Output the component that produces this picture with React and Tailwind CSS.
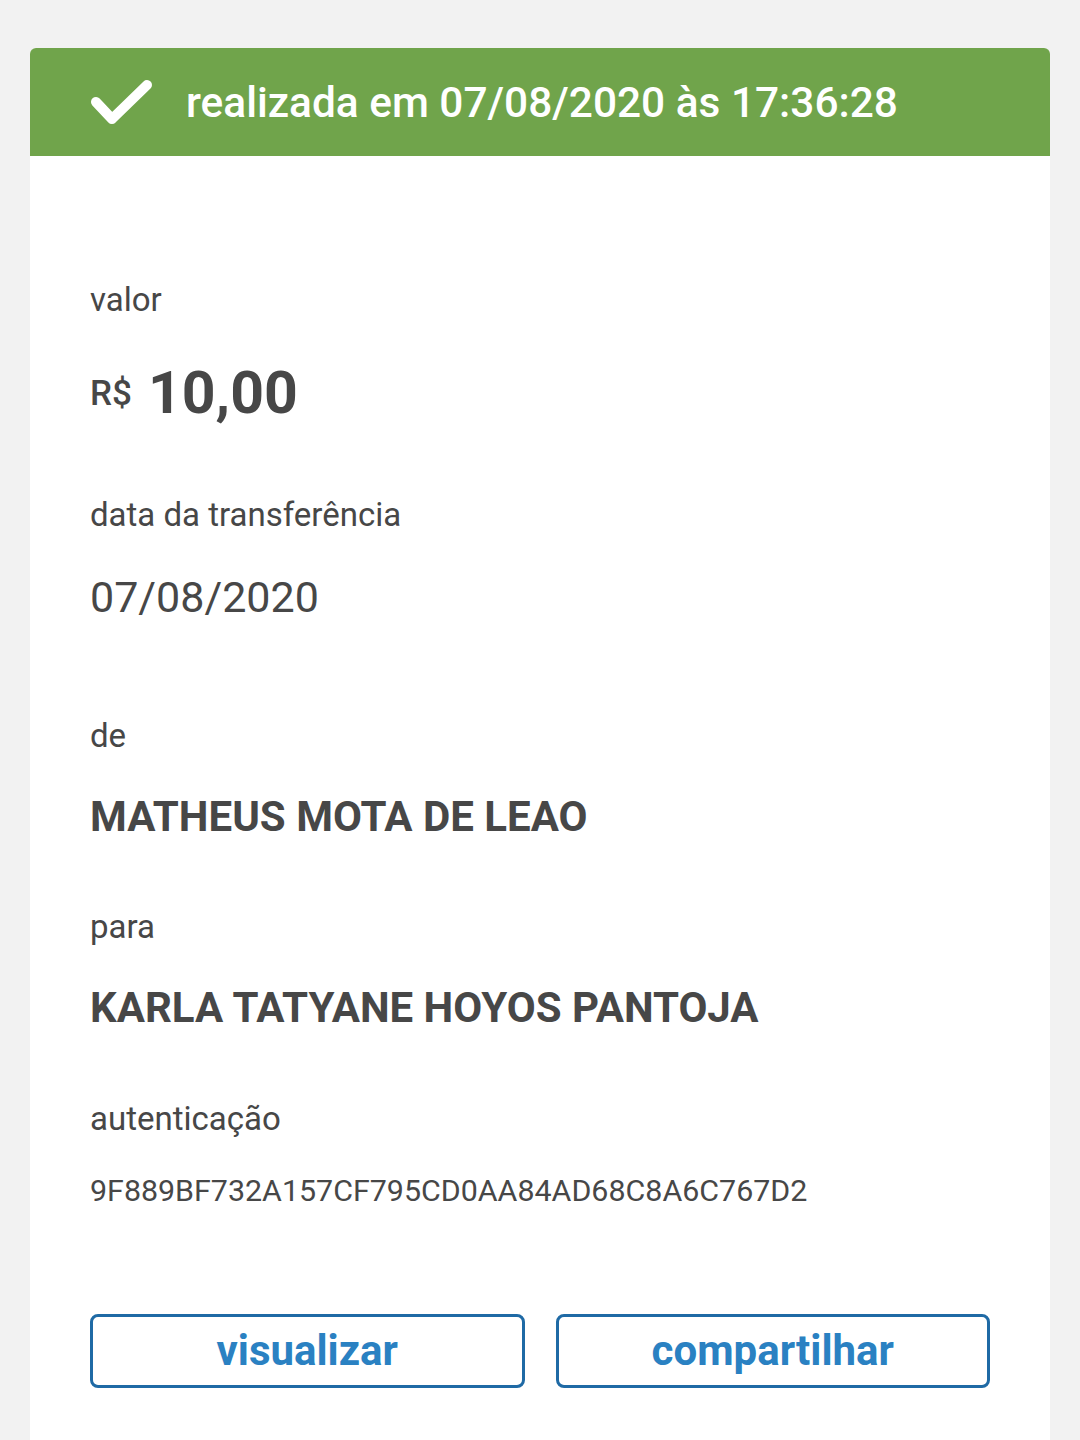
export default function App() {
  return (
    <div className="min-h-screen bg-[#f2f2f2] px-[30px] pt-[48px] font-['Roboto',sans-serif] text-[#474747]">
      <div className="bg-white rounded-t-[6px] overflow-hidden min-h-[1392px]">
        <div className="h-[108px] bg-[#70a44b] flex items-center pl-[58px] pt-[3px]">
          <svg width="66" height="48" viewBox="0 0 66 48" className="shrink-0">
            <path d="M8 22 L24 39 L59 5" fill="none" stroke="white" strokeWidth="10" strokeLinecap="round" strokeLinejoin="round" />
          </svg>
          <span className="ml-[32px] text-[42.4px] font-medium text-white leading-none">
            realizada em 07/08/2020 às 17:36:28
          </span>
        </div>

        <div className="px-[60px] pt-[124px] pb-[40px]">
          <div className="text-[33px] leading-[40px]">valor</div>
          <div className="mt-[43px] flex items-center h-[60px]">
            <span className="text-[35px] font-medium leading-none">R$</span>
            <span className="ml-[16px] text-[59px] font-bold leading-[60px]">10,00</span>
          </div>

          <div className="mt-[72px] text-[33px] leading-[40px]">data da transferência</div>
          <div className="mt-[37px] text-[43px] leading-[50px]">07/08/2020</div>

          <div className="mt-[94px] text-[33px] leading-[40px]">de</div>
          <div className="mt-[36px] text-[42px] leading-[50px] font-bold">MATHEUS MOTA DE LEAO</div>

          <div className="mt-[65px] text-[33px] leading-[40px]">para</div>
          <div className="mt-[36px] text-[42px] leading-[50px] font-bold">KARLA TATYANE HOYOS PANTOJA</div>

          <div className="mt-[66px] text-[33px] leading-[40px]">autenticação</div>
          <div className="mt-[34px] text-[30.4px] leading-[36px]">9F889BF732A157CF795CD0AA84AD68C8A6C767D2</div>

          <div className="mt-[105px] grid grid-cols-2 gap-[31px]">
            <button className="h-[74px] rounded-[8px] border-[3px] border-[#1f6aa5] bg-white text-[42px] font-bold text-[#2a81c2] leading-none">
              visualizar
            </button>
            <button className="h-[74px] rounded-[8px] border-[3px] border-[#1f6aa5] bg-white text-[42px] font-bold text-[#2a81c2] leading-none">
              compartilhar
            </button>
          </div>
        </div>
      </div>
    </div>
  );
}
